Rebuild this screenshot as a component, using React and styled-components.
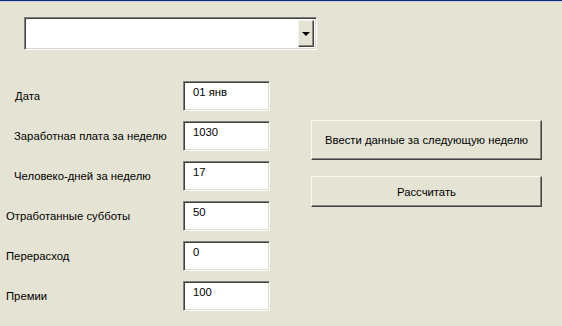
import * as React from 'react'
import styled, { createGlobalStyle } from 'styled-components'

const Global = createGlobalStyle`
  html, body {
    margin: 0;
    padding: 0;
    background: #e5e4d4;
  }
  body {
    font-family: "Liberation Sans", Tahoma, Arial, sans-serif;
    font-size: 11.3px;
    color: #000;
  }
`

const Window = styled.div`
  width: 562px;
  height: 326px;
  box-sizing: border-box;
  background: #e5e4d4;
  border-top: 1px solid #0d2a78;
  box-shadow: inset 0 1px 0 #c9d2e4;
  overflow: hidden;
`

const Combo = styled.div`
  margin: 16px 0 0 24px;
  width: 293px;
  height: 33px;
  box-sizing: border-box;
  display: flex;
  justify-content: flex-end;
  align-items: stretch;
  background: #fff;
  border-top: 1px solid #808080;
  border-left: 1px solid #808080;
  border-right: 1px solid #fff;
  border-bottom: 1px solid #fff;
  box-shadow: inset 1px 1px 0 #404040, inset -1px -1px 0 #d8d6c8;
  padding: 2px;
`

const DropButton = styled.div`
  width: 16px;
  box-sizing: border-box;
  display: flex;
  align-items: center;
  justify-content: center;
  background: #e5e4d4;
  border-top: 1px solid #f4f3ea;
  border-left: 1px solid #f4f3ea;
  border-right: 1px solid #404040;
  border-bottom: 1px solid #404040;
  box-shadow: inset -1px -1px 0 #8a8a80;
`

const Arrow = styled.span`
  width: 0;
  height: 0;
  border-left: 4px solid transparent;
  border-right: 4px solid transparent;
  border-top: 4px solid #000;
  margin-top: 1px;
`

const Main = styled.div`
  display: flex;
  align-items: flex-start;
  margin-top: 31px;
`

const Form = styled.div`
  display: flex;
  flex-direction: column;
  gap: 10px;
`

const Row = styled.div`
  display: flex;
  align-items: center;
  height: 30px;
`

const Label = styled.label`
  width: 183px;
  box-sizing: border-box;
  padding-left: ${p => p.$indent}px;
  white-space: nowrap;
`

const Field = styled.div`
  width: 87px;
  height: 30px;
  box-sizing: border-box;
  background: #fff;
  border-top: 1px solid #808080;
  border-left: 1px solid #808080;
  border-right: 1px solid #fff;
  border-bottom: 1px solid #fff;
  box-shadow: inset 1px 1px 0 #404040, inset -1px -1px 0 #dedcd0;
  padding: 4px 9px;
  line-height: 13px;
`

const Actions = styled.div`
  display: flex;
  flex-direction: column;
  gap: 16px;
  margin: 39px 0 0 41px;
`

const Button = styled.div`
  width: 231px;
  height: ${p => p.$h}px;
  box-sizing: border-box;
  display: flex;
  align-items: center;
  justify-content: center;
  background: #e5e4d4;
  border-top: 1px solid #fbfaf2;
  border-left: 1px solid #fbfaf2;
  border-right: 1px solid #404040;
  border-bottom: 1px solid #404040;
  box-shadow: inset -1px -1px 0 #8a8a80;
  white-space: nowrap;
`

const rows = [
  { label: 'Дата', value: '01 янв', indent: 15 },
  { label: 'Заработная плата за неделю', value: '1030', indent: 14 },
  { label: 'Человеко-дней за неделю', value: '17', indent: 14 },
  { label: 'Отработанные субботы', value: '50', indent: 6 },
  { label: 'Перерасход', value: '0', indent: 6 },
  { label: 'Премии', value: '100', indent: 6 },
]

export default function App() {
  return (
    <Window>
      <Global />
      <Combo>
        <DropButton>
          <Arrow />
        </DropButton>
      </Combo>
      <Main>
        <Form>
          {rows.map(r => (
            <Row key={r.label}>
              <Label $indent={r.indent}>{r.label}</Label>
              <Field>{r.value}</Field>
            </Row>
          ))}
        </Form>
        <Actions>
          <Button $h={40}>Ввести данные за следующую неделю</Button>
          <Button $h={31}>Рассчитать</Button>
        </Actions>
      </Main>
    </Window>
  )
}
